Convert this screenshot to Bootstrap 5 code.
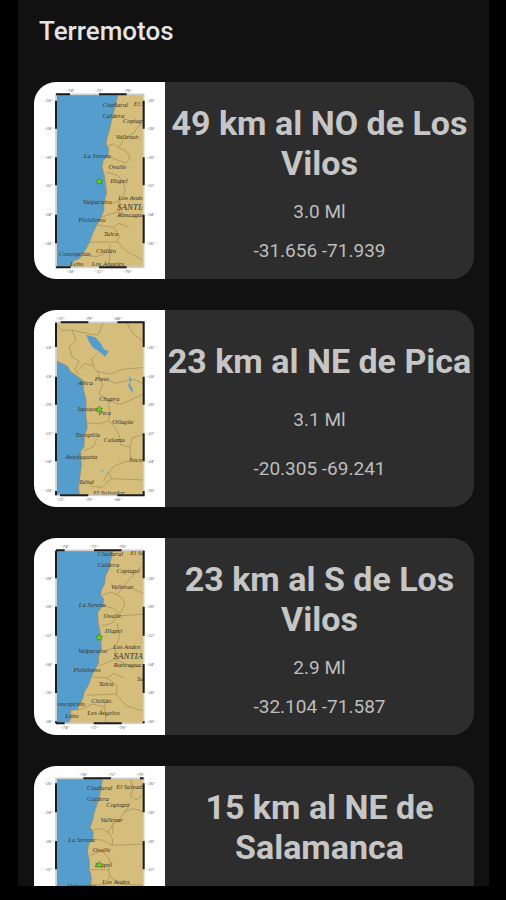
<!DOCTYPE html>
<html lang="es" data-bs-theme="dark">
<head>
<meta charset="utf-8">
<meta name="viewport" content="width=device-width, initial-scale=1">
<title>Terremotos</title>
<link href="https://cdn.jsdelivr.net/npm/bootstrap@5.3.0/dist/css/bootstrap.min.css" rel="stylesheet">
<style>
body { background: #000; font-family: Roboto, "Liberation Sans", sans-serif; padding: 0 17px 14px 18px; }
.screen { background: #111; }
.app-title { font-size: 26px; line-height: 32px; font-weight: 500; color: #e4e4e4; padding: 15px 21px 0; margin-bottom: 35px; }
.quakes { gap: 31px; padding: 0 15px 16px 16px; scrollbar-width: none; }
.quakes::-webkit-scrollbar { display: none; }
.quake { background: #2d2d2d; border-radius: 22px; min-height: 197px; }
.quake-map { flex: 0 0 131px; background: #fff; }
.place { font-size: 34px; line-height: 40px; font-weight: 700; color: #c6c6c6; }
.detail { font-size: 19px; line-height: 22px; color: #bdbdbd; }
.sea { fill: #559dcd; }
.land { fill: #d5bd7c; stroke: #a08a58; stroke-width: 2; }
.edge { fill: none; stroke: #a08c5c; stroke-width: 2; }
.frame { fill: none; stroke: #cfcfcf; stroke-width: 5; }
.scale { fill: none; stroke: #1c1c1c; stroke-width: 6; }
.star { fill: #6fd91c; stroke: #3c8a1a; stroke-width: 2; }
.town { font: italic 20px "Liberation Serif", serif; fill: #3b3524; text-anchor: middle; }
.capital { font-size: 27px; }
.tick { font: italic 14px "Liberation Serif", serif; fill: #555; text-anchor: middle; }
</style>
<script src="https://cdn.jsdelivr.net/npm/bootstrap@5.3.0/dist/js/bootstrap.bundle.min.js" defer></script>
</head>
<body class="vh-100">
<svg class="d-none" aria-hidden="true"><symbol id="star" viewBox="-12 -12 24 24"><path class="star" d="M0-10 3-3 10-3 5 2 7 9 0 5-7 9-5 2-10-3-3-3Z"/></symbol></svg>
<div class="screen d-flex flex-column h-100 overflow-hidden">
  <header><h1 class="app-title">Terremotos</h1></header>
  <main class="quakes d-flex flex-column flex-grow-1 overflow-auto">

    <article class="quake d-flex flex-shrink-0 overflow-hidden">
      <svg class="quake-map" viewBox="12 12 393 591" role="img" aria-label="Mapa de Los Vilos">
        <svg x="79" y="50" width="261" height="517" viewBox="79 50 261 517">
          <rect class="sea" x="79" y="50" width="261" height="517"/>
          <path class="land" d="M264 46 258 78 248 112 240 150 232 178 228 198 236 212 234 234 220 246 216 266 222 288 226 312 230 345 222 372 222 396 212 420 200 442 188 466 180 490 166 516 150 540 130 550 120 572H345V46Z"/>
          <path class="edge" d="M345 130 322 148 312 165 282 182 266 210 250 198 230 204M266 210 290 220 300 240 288 256 236 236M318 170 330 186M230 282 262 292 280 310 286 340 270 368 240 378M270 368 268 400 212 418M268 400 296 416 345 414M204 442 250 448 266 436 296 448M250 448 268 472 262 492 180 492M262 492 290 520 345 550M240 500 238 570M150 530 200 536 238 520"/>
          <g class="town"><text x="256" y="87">Chañaral</text><text x="328" y="84">El S</text><text x="250" y="119">Caldera</text><text x="313" y="135">Copiapó</text><text x="291" y="183">Vallenar</text><text x="202" y="240">La Serena</text><text x="262" y="272">Ovalle</text><text x="267" y="316">Illapel</text><text x="306" y="365">Los Andes</text><text x="202" y="377">Valparaíso</text><text class="capital" x="325" y="396">SANTIAGO</text><text x="303" y="418">Rancagua</text><text x="186" y="433">Pichilemu</text><text x="243" y="475">Talca</text><text x="228" y="526">Chillán</text><text x="134" y="535">Concepción</text><text x="234" y="563">Los Ángeles</text><text x="140" y="565">Lebu</text></g>
          <use href="#star" x="196" y="298" width="24" height="24"/>
        </svg>
        <rect class="frame" x="78" y="49" width="263" height="519"/>
        <path class="scale" d="M78 49H120M207 49H290M78 68V152M78 238V322M78 410V496M341 68V152M341 238V322M341 410V496M78 568H122M207 568H290"/>
        <g class="tick"><text x="122" y="42">-74°</text><text x="207" y="42">-72°</text><text x="293" y="42">-70°</text><text x="122" y="585">-74°</text><text x="207" y="585">-72°</text><text x="293" y="585">-70°</text><text x="56" y="72">-26°</text><text x="56" y="157">-28°</text><text x="56" y="243">-30°</text><text x="56" y="327">-32°</text><text x="56" y="413">-34°</text><text x="56" y="500">-36°</text><text x="363" y="72">-26°</text><text x="363" y="157">-28°</text><text x="363" y="243">-30°</text><text x="363" y="327">-32°</text><text x="363" y="413">-34°</text><text x="363" y="500">-36°</text></g>
      </svg>
      <div class="flex-grow-1 d-flex flex-column justify-content-evenly text-center pt-1">
        <h2 class="place m-0">49 km al NO de Los Vilos</h2>
        <p class="detail m-0">3.0 Ml</p>
        <p class="detail m-0">-31.656 -71.939</p>
      </div>
    </article>

    <article class="quake d-flex flex-shrink-0 overflow-hidden">
      <svg class="quake-map" viewBox="12 12 393 591" role="img" aria-label="Mapa de Pica">
        <svg x="79" y="50" width="261" height="517" viewBox="79 50 261 517">
          <rect class="sea" x="79" y="50" width="261" height="517"/>
          <path class="land" d="M74 162 112 180 122 198 144 212 162 226 160 250 168 280 168 330 172 364 164 386 162 422 152 436 154 480 146 540 148 572H345V46H74Z"/>
          <path class="edge" d="M80 56 96 74 126 72 138 102 118 124 126 152 148 166 134 190 146 206M126 72 160 80 204 88 220 50M204 140 184 160 190 180 164 172 148 190M290 50 310 84 345 110M190 180 202 196 218 238 206 262 234 282 240 320 236 344 256 366 268 388 272 416 300 424 306 396 345 384M202 196 240 204 276 190 345 184M230 220 256 232 310 220 345 236M234 282 270 296 345 262M170 350 206 354 236 344M300 424 302 462 256 478 236 498 244 518 216 544 180 540M244 518 345 522M160 436 190 422 200 400M236 498 220 526"/>
          <path class="sea" d="M168 86 196 94 212 112 222 130 236 136 226 152 206 136 188 124 176 104ZM296 210 304 218 300 236 308 250 310 260 300 250 294 236 300 230ZM214 492h6v4h-6Z"/>
          <g class="town"><text x="215" y="224">Puno</text><text x="166" y="238">Arica</text><text x="238" y="284">Chapra</text><text x="174" y="315">Iquique</text><text x="224" y="326">Pica</text><text x="279" y="355">Ollagüe</text><text x="173" y="393">Tocopilla</text><text x="253" y="408">Calama</text><text x="154" y="459">Antofagasta</text><text x="317" y="467">Soco</text><text x="169" y="533">Taltal</text><text x="237" y="566">El Salvador</text></g>
          <use href="#star" x="196" y="298" width="24" height="24"/>
        </svg>
        <rect class="frame" x="78" y="49" width="263" height="519"/>
        <path class="scale" d="M92 49H175M262 49H344M78 50V123M78 212V296M78 382V466M78 555V568M341 50V123M341 212V296M341 382V466M341 555V568M90 568H175M262 568H344"/>
        <g class="tick"><text x="92" y="42">-72°</text><text x="177" y="42">-70°</text><text x="263" y="42">-68°</text><text x="92" y="585">-72°</text><text x="177" y="585">-70°</text><text x="263" y="585">-68°</text><text x="56" y="128">-16°</text><text x="56" y="215">-18°</text><text x="56" y="301">-20°</text><text x="56" y="387">-22°</text><text x="56" y="471">-24°</text><text x="56" y="559">-26°</text><text x="363" y="128">-16°</text><text x="363" y="215">-18°</text><text x="363" y="301">-20°</text><text x="363" y="387">-22°</text><text x="363" y="471">-24°</text><text x="363" y="559">-26°</text></g>
      </svg>
      <div class="flex-grow-1 d-flex flex-column justify-content-evenly text-center pt-1">
        <h2 class="place m-0">23 km al NE de Pica</h2>
        <p class="detail m-0">3.1 Ml</p>
        <p class="detail m-0">-20.305 -69.241</p>
      </div>
    </article>

    <article class="quake d-flex flex-shrink-0 overflow-hidden">
      <svg class="quake-map" viewBox="12 12 393 591" role="img" aria-label="Mapa de Los Vilos">
        <svg x="79" y="50" width="261" height="517" viewBox="79 50 261 517">
          <rect class="sea" x="79" y="50" width="261" height="517"/>
          <path class="land" d="M250 46 242 78 238 102 226 126 224 150 214 168 212 184 222 196 218 216 204 234 204 262 210 290 212 312 214 342 206 368 206 386 194 408 184 428 176 452 164 472 158 494 148 512 142 526 122 530 124 550 112 572H345V46Z"/>
          <path class="edge" d="M345 90 322 110 302 132 280 158 262 182 240 174 216 184M262 182 278 194 284 214 268 240 250 222 220 216M300 160 345 180M214 276 246 268 262 246 345 240M262 268 268 310 256 340 226 350M256 340 254 376 206 396M254 376 300 396 345 398M186 428 232 432 252 418 282 432M232 432 262 456 258 480 170 484M258 480 290 516 345 532M224 504 228 568M140 530 190 510 224 520"/>
          <g class="town"><text x="241" y="66">Chañaral</text><text x="325" y="64">El Sal</text><text x="235" y="100">Caldera</text><text x="294" y="116">Copiapó</text><text x="277" y="164">Vallenar</text><text x="187" y="220">La Serena</text><text x="247" y="253">Ovalle</text><text x="251" y="297">Illapel</text><text x="290" y="346">Los Andes</text><text x="188" y="358">Valparaíso</text><text class="capital" x="314" y="376">SANTIAGO</text><text x="292" y="400">Rancagua</text><text x="171" y="414">Pichilemu</text><text x="228" y="456">Talca</text><text x="214" y="507">Chillán</text><text x="117" y="517">Concepción</text><text x="220" y="543">Los Ángeles</text><text x="126" y="551">Lebu</text><text x="331" y="440">Sa</text></g>
          <use href="#star" x="196" y="298" width="24" height="24"/>
        </svg>
        <rect class="frame" x="78" y="49" width="263" height="519"/>
        <path class="scale" d="M78 49H104M192 49H275M78 50V133M78 218V305M78 390V477M78 562V568M341 50V133M341 218V305M341 390V477M341 562V568M78 568H104M191 568H275"/>
        <g class="tick"><text x="106" y="42">-74°</text><text x="192" y="42">-72°</text><text x="277" y="42">-70°</text><text x="106" y="585">-74°</text><text x="192" y="585">-72°</text><text x="277" y="585">-70°</text><text x="56" y="138">-28°</text><text x="56" y="223">-30°</text><text x="56" y="309">-32°</text><text x="56" y="395">-34°</text><text x="56" y="481">-36°</text><text x="56" y="566">-38°</text><text x="363" y="138">-28°</text><text x="363" y="223">-30°</text><text x="363" y="309">-32°</text><text x="363" y="395">-34°</text><text x="363" y="481">-36°</text><text x="363" y="566">-38°</text></g>
      </svg>
      <div class="flex-grow-1 d-flex flex-column justify-content-evenly text-center pt-1">
        <h2 class="place m-0">23 km al S de Los Vilos</h2>
        <p class="detail m-0">2.9 Ml</p>
        <p class="detail m-0">-32.104 -71.587</p>
      </div>
    </article>

    <article class="quake d-flex flex-shrink-0 overflow-hidden">
      <svg class="quake-map" viewBox="12 18 393 591" role="img" aria-label="Mapa de Salamanca">
        <svg x="79" y="56" width="261" height="517" viewBox="79 56 261 517">
          <rect class="sea" x="79" y="56" width="261" height="517"/>
          <path class="land" d="M218 50 214 84 208 110 200 136 192 160 188 182 180 202 190 216 188 240 176 252 172 276 178 300 178 326 184 350 182 380 170 420 150 460 130 500 110 572H345V50Z"/>
          <path class="edge" d="M300 56 310 80 302 110 322 120 345 96M302 130 284 156 268 178 250 190 234 216 212 206 188 210M234 216 248 236 246 256 216 240 190 238M284 156 310 146 345 156M250 190 248 220M246 256 345 252M180 286 216 272 240 300 236 330 182 328M236 330 240 350 222 376 184 372M240 350 268 372 345 376"/>
          <g class="town"><text x="209" y="90">Chañaral</text><text x="306" y="87">El Salvador</text><text x="204" y="124">Caldera</text><text x="263" y="140">Copiapó</text><text x="245" y="187">Vallenar</text><text x="155" y="245">La Serena</text><text x="215" y="277">Ovalle</text><text x="220" y="320">Illapel</text><text x="258" y="371">Los Andes</text><text x="156" y="383">Valparaíso</text></g>
          <use href="#star" x="196" y="302" width="24" height="24"/>
        </svg>
        <rect class="frame" x="78" y="55" width="263" height="519"/>
        <path class="scale" d="M160 55H243M330 55H341M78 70V157M78 243V328M78 415V500M341 70V157M341 243V328M341 415V500"/>
        <g class="tick"><text x="160" y="48">-74°</text><text x="246" y="48">-72°</text><text x="331" y="48">-70°</text><text x="56" y="76">-26°</text><text x="56" y="162">-28°</text><text x="56" y="248">-30°</text><text x="56" y="333">-32°</text><text x="363" y="76">-26°</text><text x="363" y="162">-28°</text><text x="363" y="248">-30°</text><text x="363" y="333">-32°</text></g>
      </svg>
      <div class="flex-grow-1 d-flex flex-column justify-content-evenly text-center pt-1">
        <h2 class="place m-0">15 km al NE de Salamanca</h2>
        <p class="detail m-0">2.8 Ml</p>
        <p class="detail m-0">-31.700 -70.880</p>
      </div>
    </article>
  </main>
</div>
</body>
</html>
